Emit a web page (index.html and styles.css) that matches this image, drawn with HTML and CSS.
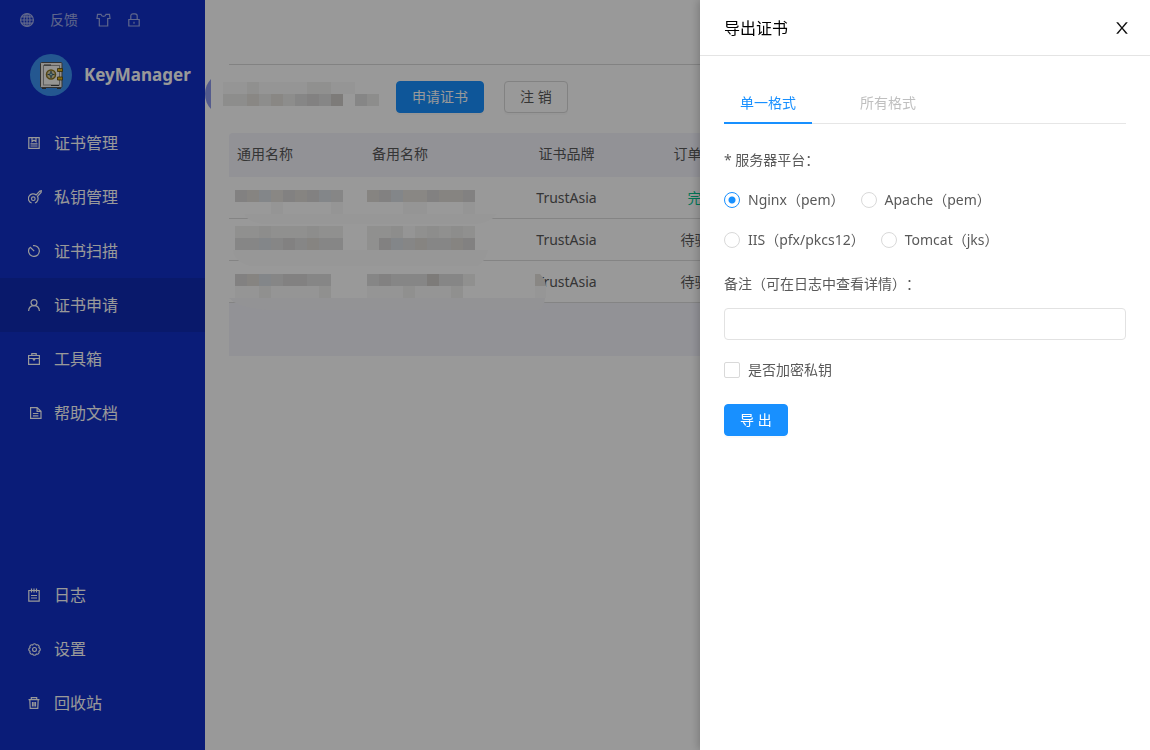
FILE: index.html
```html
<!DOCTYPE html>
<html lang="zh-CN">
<head>
<meta charset="utf-8">
<meta name="viewport" content="width=device-width, initial-scale=1">
<title>KeyManager</title>
<link rel="stylesheet" href="styles.css">
</head>
<body>
<div class="app">
  <aside class="sidebar">
    <div class="tools">
      <button class="tool" type="button" aria-label="语言">
        <svg class="icon" width="14" height="14" viewBox="0 0 14 14"><circle cx="7" cy="7" r="6.4"/><ellipse cx="7" cy="7" rx="3" ry="6.4"/><path d="M7 .6v12.8M.6 7h12.8M1.600 3.800h10.800M1.600 10.200h10.800"/></svg>
      </button>
      <a class="tool" href="#feedback">反馈</a>
      <button class="tool" type="button" aria-label="主题">
        <svg class="icon" width="18" height="14" viewBox="0 0 18 14"><path d="M7 1.300H3.500L3 5.500h2.300v7.500h8.400V5.500H16l-.5-4.200H12c-.3 1.300-1.200 2-2.500 2S7.300 2.600 7 1.300z"/></svg>
      </button>
      <button class="tool" type="button" aria-label="锁定">
        <svg class="icon" width="12" height="14" viewBox="0 0 12 14"><path d="M.8 6.500h10.400v6.500H.8zM2.800 6.500V3c0-1.300.9-2.200 2.200-2.200h2c1.300 0 2.200.9 2.200 2.200v3.500M6 8.800v2M5.500 9.300h1"/></svg>
      </button>
    </div>

    <div class="brand">
      <svg class="logo" width="42" height="42" viewBox="0 0 42 42">
        <circle cx="21" cy="21" r="21" fill="#3c92f0"/>
        <path d="M12 33h4v2h-4zM27 33h4v2h-4z" fill="#444"/>
        <rect x="10.500" y="8.500" width="21.500" height="25" rx="1" fill="#f2efea" stroke="#555" stroke-width="1"/>
        <rect x="13.500" y="11.500" width="16" height="19.500" fill="#fbf9f5" stroke="#999" stroke-width="1"/>
        <path d="M14 11h7M21 31.500h8" stroke="#444" stroke-width="1"/>
        <circle cx="21" cy="20.500" r="4.500" fill="#d9cfa4" stroke="#8a7420" stroke-width="1.500"/>
        <path d="M21 17v7M17.500 20.500h7" stroke="#35546a" stroke-width="1.200"/>
        <circle cx="21" cy="20.500" r="1.500" fill="#9fd0c8" stroke="#35546a" stroke-width=".8"/>
        <path d="M27.500 14.500h5v3h-5zM27.500 23h5v3h-5z" fill="#e3b419" stroke="#54460f" stroke-width=".8"/>
      </svg>
      <span class="brand-name">KeyManager</span>
    </div>

    <nav class="menu">
      <a class="menu-item" href="#certs"><svg class="icon" width="12" height="12" viewBox="0 0 12 12"><path d="M.8.6h10.400v10.800H.8zM4 .6v4l2-1.400 2 1.400v-4M2.500 6.800h7M2.500 9h7"/></svg>证书管理</a>
      <a class="menu-item" href="#keys"><svg class="icon" width="14" height="14" viewBox="0 0 14 14"><path d="M3.600 13A4.700 4.700 0 1 1 8.200 5l3.600-3.900 1.500-.3-.2 1.600-3.600 4A4.700 4.700 0 0 1 7 13"/><circle cx="5.300" cy="8.700" r="1.800"/></svg>私钥管理</a>
      <a class="menu-item" href="#scan"><svg class="icon" width="12" height="12" viewBox="0 0 12 12"><path d="M5 .7a5.400 5.400 0 1 1-3.300 2M2 2l4.200 4.200"/></svg>证书扫描</a>
      <a class="menu-item active" href="#apply" aria-current="page"><svg class="icon" width="12" height="12" viewBox="0 0 12 12"><circle cx="6" cy="3.600" r="3"/><path d="M.6 12c.2-3.200 2.400-5.300 5.400-5.300s5.200 2.100 5.400 5.300"/></svg>证书申请</a>
      <a class="menu-item" href="#toolbox"><svg class="icon" width="12" height="12" viewBox="0 0 12 12"><path d="M.6 2.500h10.800v8.900H.6zM3.800 2.500V.6h4.400v1.900M.6 5.500h3.700M7.700 5.500h3.700M4.800 5.500h2.400L6 7.200z"/></svg>工具箱</a>
      <a class="menu-item" href="#docs"><svg class="icon" width="14" height="12" viewBox="0 0 14 12"><path d="M2.600.6h6.500l3.900 3.700v7.100H2.600zM9.100.6v3.700H13M4.900 6.500h5.500M4.900 8.800h5.500"/></svg>帮助文档</a>
    </nav>

    <nav class="menu menu-bottom">
      <a class="menu-item" href="#log"><svg class="icon" width="12" height="14" viewBox="0 0 12 14"><path d="M.8 2.500h10.400v10.700H.8zM3.500.5v4M6 .5v4M8.500.5v4M3 7.500h6M3 10h6"/></svg>日志</a>
      <a class="menu-item" href="#settings"><svg class="icon" width="13" height="13" viewBox="0 0 14 14"><circle cx="7" cy="7" r="2.100"/><path d="M11.800 8.990A2.100 2.100 0 0 1 8.990 11.800A2.100 2.100 0 0 1 5.010 11.800A2.100 2.100 0 0 1 2.200 8.990A2.100 2.100 0 0 1 2.200 5.010A2.100 2.100 0 0 1 5.010 2.200A2.100 2.100 0 0 1 8.990 2.200A2.100 2.100 0 0 1 11.800 5.010A2.100 2.100 0 0 1 11.800 8.990z"/></svg>设置</a>
      <a class="menu-item" href="#trash"><svg class="icon" width="12" height="12" viewBox="0 0 12 12"><path d="M.5 2.600h11M3.300 2.600V.6h5.400v2M1.800 2.600l.4 8.800h7.600l.4-8.800M4.500 5v4.500M6 5v4.500M7.500 5v4.500"/></svg>回收站</a>
    </nav>
  </aside>

  <main class="main">
    <button class="collapse" type="button" aria-label="收起菜单"></button>
    <div class="toolbar">
      <svg class="redacted-name" width="147" height="24" viewBox="229 82 147 24" aria-hidden="true">
        <g class="cells">
          <path class="t-faint" d="M223 88h24M259 88h60M331 88h24"/>
          <path class="t-pale" d="M247 88h12M307 88h12M319 88h12"/>
          <path class="t-soft" d="M223 100h24M259 100h12M283 100h24M367 100h12"/>
          <path class="t-light" d="M247 100h12M271 100h12"/>
          <path class="t-mid" d="M295 100h12M319 100h12M355 100h12"/>
          <path class="t-dark" d="M307 100h12"/>
          <path class="t-deep" d="M331 100h12"/>
        </g>
      </svg>
      <button class="btn btn-primary" type="button">申请证书</button>
      <button class="btn" type="button">注 销</button>
    </div>

    <div class="table-wrap">
      <table class="orders">
        <thead>
          <tr><th>通用名称</th><th>备用名称</th><th class="center">证书品牌</th><th class="center">订单状态</th><th class="rest"></th></tr>
        </thead>
        <tbody>
          <tr><td></td><td></td><td class="center">TrustAsia</td><td class="center done">完成</td><td></td></tr>
          <tr><td></td><td></td><td class="center">TrustAsia</td><td class="center">待验证</td><td></td></tr>
          <tr><td></td><td></td><td class="center">TrustAsia</td><td class="center">待验证</td><td></td></tr>
        </tbody>
      </table>
      <div class="table-footer"></div>
      <svg class="redaction" width="330" height="142" viewBox="223 170 330 142" aria-hidden="true">
        <path fill="#fcfcfc" d="M244 214h253q-6 8-20 10H262q-14-2-18-10z"/>
        <path fill="#fcfcfc" d="M233 250h255q-2 10-10 16H250q-16-4-17-16z"/>
        <path fill="#f5f5f8" d="M229 298h316q-1 10-6 12H268q-30-2-39-12z"/>
        <path fill="#e5e2dc" d="M535 274h5q5 5 6 12h-11z"/>
        <path fill="#fafafa" d="M535 286h11v12h-11z"/>
        <g class="cells">
          <path class="t-dark" d="M235 196h12M283 196h36M379 196h12M427 196h36M463 196h12"/>
          <path class="t-warm" d="M247 196h12M295 196h12M367 196h12M439 196h24"/>
          <path class="t-cool" d="M259 196h12M319 196h12M391 196h12"/>
          <path class="t-light" d="M271 196h12M403 196h24"/>
          <path class="t-mid" d="M331 196h12"/>
          <path class="t-faint" d="M271 208h12M331 208h12M403 208h24M463 208h12"/>

          <path class="t-pale" d="M235 232h108M367 232h36M415 232h60M367 244h12"/>
          <path class="t-soft" d="M259 232h12M307 232h12M391 232h12M427 232h12M451 232h12"/>
          <path class="t-faint" d="M403 232h12"/>
          <path class="t-mid" d="M235 244h24M271 244h12M295 244h12M319 244h24M403 244h12M427 244h24"/>
          <path class="t-dark" d="M283 244h12M379 244h12M463 244h12"/>
          <path class="t-cool" d="M259 244h12M391 244h12"/>
          <path class="t-warm" d="M307 244h12M415 244h12M451 244h12"/>

          <path class="t-dark" d="M235 280h12M283 280h24M379 280h12M451 280h12"/>
          <path class="t-warm" d="M247 280h12"/>
          <path class="t-cool" d="M259 280h12"/>
          <path class="t-mid" d="M271 280h12M307 280h24M367 280h12M391 280h36M439 280h24"/>
          <path class="t-deep" d="M427 280h12"/>
          <path class="t-pale" d="M463 280h12"/>
          <path class="t-faint" d="M235 292h96M367 292h96"/>
          <path class="t-pale" d="M259 292h12M319 292h12M403 292h12M451 292h12"/>
        </g>
      </svg>
    </div>
  </main>
</div>

<div class="mask"></div>

<section class="drawer" role="dialog" aria-labelledby="drawer-title">
  <header class="drawer-header">
    <h2 class="drawer-title" id="drawer-title">导出证书</h2>
    <button class="close" type="button" aria-label="关闭">
      <svg width="16" height="16" viewBox="64 64 896 896"><path d="M563.8 512l262.5-312.900c4.400-5.200.7-13.100-6.100-13.100h-79.800c-4.700 0-9.200 2.100-12.300 5.700L511.600 449.800 295.100 191.700c-3-3.600-7.500-5.700-12.300-5.700H203c-6.800 0-10.500 7.900-6.100 13.100L459.400 512 196.900 824.900A7.950 7.950 0 0 0 203 838h79.800c4.700 0 9.200-2.100 12.300-5.700l216.500-258.100 216.500 258.100c3 3.600 7.500 5.700 12.300 5.700h79.800c6.800 0 10.500-7.900 6.100-13.100L563.800 512z"/></svg>
    </button>
  </header>
  <form class="drawer-body">
    <div class="tabs" role="tablist">
      <button class="tab selected" type="button" role="tab" aria-selected="true">单一格式</button>
      <button class="tab" type="button" role="tab" aria-selected="false">所有格式</button>
    </div>

    <fieldset class="platforms">
      <legend class="field-label">* 服务器平台：</legend>
      <div class="options">
        <label class="option"><input class="radio" type="radio" name="platform" checked>Nginx（pem）</label>
        <label class="option"><input class="radio" type="radio" name="platform">Apache（pem）</label>
        <label class="option"><input class="radio" type="radio" name="platform">IIS（pfx/pkcs12）</label>
        <label class="option"><input class="radio" type="radio" name="platform">Tomcat（jks）</label>
      </div>
    </fieldset>

    <div class="remark">
      <label class="field-label" for="remark">备注（可在日志中查看详情）：</label>
      <input class="text-input" id="remark" type="text">
    </div>

    <label class="encrypt"><input class="checkbox" type="checkbox">是否加密私钥</label>

    <div><button class="btn btn-primary" type="button">导 出</button></div>
  </form>
</section>
</body>
</html>
```

FILE: styles.css
```css
* {
  box-sizing: border-box;
}

body {
  margin: 0;
  font: 14px/22px "Noto Sans", "Noto Sans CJK SC", sans-serif;
  text-spacing-trim: space-all;
  color: #595959;
  background: #fff;
}

button,
input {
  font: inherit;
  color: inherit;
}

button {
  cursor: pointer;
}

a {
  color: inherit;
  text-decoration: none;
}

.app {
  display: flex;
  min-height: 100vh;
}

/* Sidebar */
.sidebar {
  flex: none;
  width: 205px;
  padding: 10px 0 20px;
  display: flex;
  flex-direction: column;
  background: #112fc8;
  color: #fff;
}

.icon {
  display: block;
  flex: none;
  fill: none;
  stroke: currentColor;
  stroke-width: 1.2;
}

.tools {
  display: flex;
  align-items: center;
  gap: 16px;
  height: 20px;
  padding-left: 20px;
  opacity: 0.6;
}

.tool {
  padding: 0;
  border: 0;
  background: none;
}

.brand {
  display: flex;
  align-items: center;
  gap: 12px;
  margin: 24px 0 20px;
  padding-left: 30px;
}

.logo {
  flex: none;
}

.brand-name {
  font-size: 17px;
  font-weight: 700;
}

.menu-bottom {
  margin-top: auto;
}

.menu-item {
  display: grid;
  grid-template-columns: 14px 1fr;
  align-items: center;
  justify-items: start;
  column-gap: 12px;
  height: 54px;
  padding-left: 28px;
  font-size: 16px;
}

.menu-item.active {
  background: rgba(0, 0, 0, 0.1);
}

/* Order list */
.main {
  position: relative;
  flex: 1;
  min-width: 0;
  padding: 64px 24px 24px;
}

.collapse {
  position: absolute;
  left: 0;
  top: 72px;
  width: 44px;
  height: 44px;
  padding: 0;
  border: 0;
  border-radius: 50%;
  background: #8c98ec;
  clip-path: inset(0 38px 0 0);
}

.toolbar {
  display: flex;
  gap: 20px;
  padding: 16px 0 20px;
  border-top: 1px solid #d9d9d9;
}

.redacted-name {
  margin-top: 1px;
  overflow: visible;
}

.btn {
  height: 32px;
  padding: 0 15px;
  border: 1px solid #d9d9d9;
  border-radius: 4px;
  background: #fff;
  box-shadow: 0 2px 0 rgba(0, 0, 0, 0.02);
}

.btn-primary {
  border-color: #1890ff;
  background: #1890ff;
  color: #fff;
}

.table-wrap {
  position: relative;
}

.orders {
  width: 100%;
  table-layout: fixed;
  border-spacing: 0;
}

.orders th {
  width: 135px;
  height: 44px;
  padding: 0 8px 2px;
  background: #f3f3fb;
  font-weight: 400;
  text-align: left;
}

.orders th:first-child {
  border-top-left-radius: 4px;
}

.orders .rest {
  width: auto;
}

.orders td {
  height: 42px;
  padding: 0 8px;
  border-bottom: 1px solid #dcdcdc;
}

.orders .center {
  text-align: center;
}

.orders .done {
  color: #00c48f;
}

.table-footer {
  height: 53px;
  background: #f3f3fb;
}

.redaction {
  position: absolute;
  left: -6px;
  top: 37px;
}

.cells {
  fill: none;
  stroke-width: 12;
  shape-rendering: crispEdges;
}

.t-deep { stroke: #d0cdca; }
.t-dark { stroke: #d9d8d7; }
.t-mid { stroke: #dfe0df; }
.t-warm { stroke: #e0dcd8; }
.t-cool { stroke: #dbdfe4; }
.t-light { stroke: #e4e2dd; }
.t-soft { stroke: #ecebea; }
.t-pale { stroke: #f0f0ef; }
.t-faint { stroke: #f8f8f8; }

/* Drawer */
.mask {
  position: fixed;
  inset: 0;
  background: rgba(0, 0, 0, 0.4);
}

.drawer {
  position: fixed;
  top: 0;
  right: 0;
  bottom: 0;
  width: 450px;
  max-width: 100%;
  overflow: auto;
  background: #fff;
  box-shadow: -2px 0 8px rgba(0, 0, 0, 0.2);
}

.drawer-header {
  display: flex;
  align-items: center;
  justify-content: space-between;
  height: 56px;
  padding: 0 20px 0 24px;
  border-bottom: 1px solid #e4e4e4;
}

.drawer-title {
  margin: 0;
  font-size: 16px;
  font-weight: 400;
  color: #000;
}

.close {
  display: flex;
  padding: 0;
  border: 0;
  background: none;
  color: #111;
}

.close svg {
  fill: currentColor;
}

.drawer-body {
  padding: 24px;
}

.tabs {
  display: flex;
  gap: 32px;
  height: 44px;
  margin-bottom: 24px;
  box-shadow: inset 0 -1px #e6e6e6;
}

.tab {
  padding: 4px 16px 0;
  border: 0;
  border-bottom: 2px solid transparent;
  background: none;
  color: #bfbfbf;
}

.tab.selected {
  border-color: #1890ff;
  color: #1890ff;
}

.platforms {
  min-width: 0;
  margin: 0;
  padding: 0;
  border: 0;
}

.field-label {
  display: block;
  padding: 0;
  line-height: 24px;
}

.options {
  display: flex;
  flex-wrap: wrap;
  column-gap: 16px;
  padding: 8px 64px 12px 0;
}

.option {
  display: flex;
  align-items: center;
  gap: 8px;
  height: 40px;
}

.radio,
.checkbox {
  appearance: none;
  flex: none;
  width: 16px;
  height: 16px;
  margin: 0;
  border: 1px solid #d9d9d9;
  background: #fff;
}

.radio {
  border-radius: 50%;
}

.radio:checked {
  border-color: #1890ff;
  background: radial-gradient(circle, #1890ff 3px, #fff 4px);
}

.checkbox {
  border-radius: 2px;
}

.checkbox:checked {
  border-color: #1890ff;
  background: #1890ff;
}

.text-input {
  display: block;
  width: 100%;
  height: 32px;
  margin-top: 12px;
  padding: 0 12px;
  border: 1px solid #e2e2e2;
  border-radius: 4px;
  background: #fff;
}

.encrypt {
  display: flex;
  align-items: center;
  gap: 8px;
  height: 24px;
  margin: 18px 0 22px;
}
```
